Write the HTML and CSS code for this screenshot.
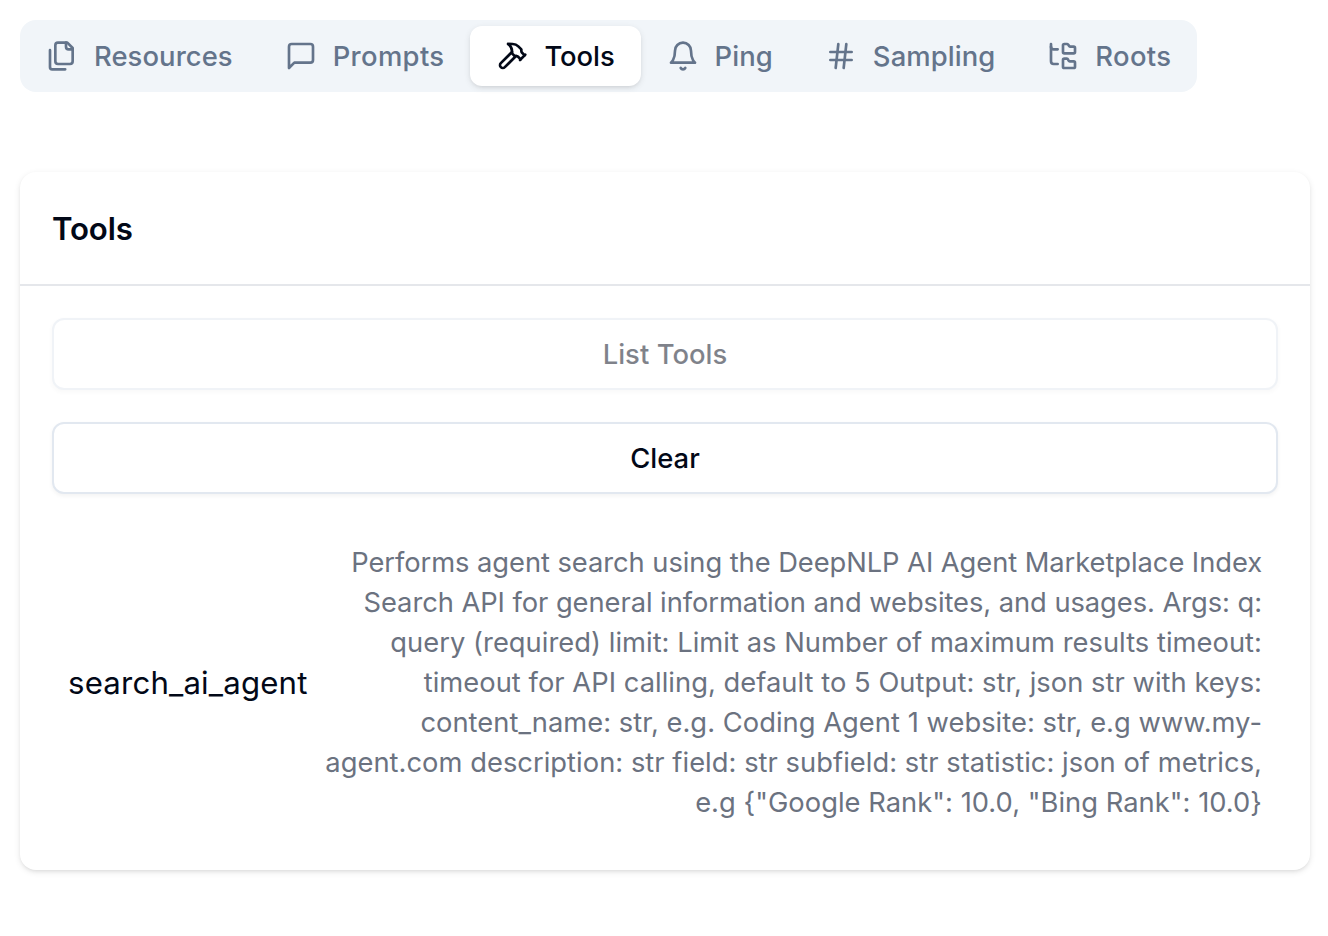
FILE: index.html
```html
<!DOCTYPE html>
<html lang="en">
<head>
<meta charset="utf-8">
<title>Tools</title>
<link rel="stylesheet" href="styles.css">
</head>
<body>
<nav class="tabs">
  <button class="tab"><svg class="icon" viewBox="0 0 24 24"><path d="M20 7h-3a2 2 0 0 1-2-2V2"/><path d="M9 18a2 2 0 0 1-2-2V4a2 2 0 0 1 2-2h7l4 4v10a2 2 0 0 1-2 2Z"/><path d="M3 7.6v12.8A1.6 1.6 0 0 0 4.6 22h9.8"/></svg><span class="label">Resources</span></button>
  <button class="tab"><svg class="icon" viewBox="0 0 24 24"><path d="M21 15a2 2 0 0 1-2 2H7l-4 4V5a2 2 0 0 1 2-2h14a2 2 0 0 1 2 2z"/></svg><span class="label label-loose">Prompts</span></button>
  <button class="tab tab-active"><svg class="icon" viewBox="0 0 24 24"><path d="m15 12-8.373 8.373a1 1 0 1 1-3-3L12 9"/><path d="m18 15 4-4"/><path d="m21.5 11.5-1.914-1.914A2 2 0 0 1 19 8.172V7l-2.26-2.26a6 6 0 0 0-4.202-1.756L9 2.96l.92.82A6.18 6.18 0 0 1 12 8.4V10l2 2h1.172a2 2 0 0 1 1.414.586L18.5 14.5"/></svg><span class="label label-tight">Tools</span></button>
  <button class="tab"><svg class="icon" viewBox="0 0 24 24"><path d="M6 8a6 6 0 0 1 12 0c0 7 3 9 3 9H3s3-2 3-9"/><path d="M10.3 21a1.94 1.94 0 0 0 3.4 0"/></svg><span class="label">Ping</span></button>
  <button class="tab"><svg class="icon" viewBox="0 0 24 24"><path d="M4 9h16M4 15h16M10 3 8 21M16 3l-2 18"/></svg><span class="label">Sampling</span></button>
  <button class="tab"><svg class="icon" viewBox="0 0 24 24"><path d="M20 10a1 1 0 0 0 1-1V6a1 1 0 0 0-1-1h-2.5a1 1 0 0 1-.8-.4l-.9-1.2A1 1 0 0 0 15 3h-2a1 1 0 0 0-1 1v5a1 1 0 0 0 1 1Z"/><path d="M20 21a1 1 0 0 0 1-1v-3a1 1 0 0 0-1-1h-2.9a1 1 0 0 1-.88-.55l-.42-.85a1 1 0 0 0-.92-.6H13a1 1 0 0 0-1 1v5a1 1 0 0 0 1 1Z"/><path d="M3 5a2 2 0 0 0 2 2h3"/><path d="M3 3v13a2 2 0 0 0 2 2h3"/></svg><span class="label label-loose">Roots</span></button>
</nav>
<main class="card">
  <header class="card-header"><h3 class="card-title">Tools</h3></header>
  <div class="card-body">
    <button class="button button-disabled" disabled>List Tools</button>
    <button class="button">Clear</button>
    <div class="tool">
      <span class="tool-name">search_ai_agent</span>
      <div class="tool-description">
        <div class="line-tight">Performs agent search using the DeepNLP AI Agent Marketplace Index</div>
        <div class="line-tight">Search API for general information and websites, and usages. Args: q:</div>
        <div>query (required) limit: Limit as Number of maximum results timeout:</div>
        <div>timeout for API calling, default to 5 Output: str, json str with keys:</div>
        <div>content_name: str, e.g. Coding Agent 1 website: str, e.g www.my-</div>
        <div>agent.com description: str field: str subfield: str statistic: json of metrics,</div>
        <div>e.g {"Google Rank": 10.0, "Bing Rank": 10.0}</div>
      </div>
    </div>
  </div>
</main>
</body>
</html>
```
FILE: styles.css
```css
* { box-sizing: border-box; }
body {
  margin: 0;
  min-height: 936px;
  padding: 20px 18px 0 20px;
  background: #fff;
  color: #020817;
  font-family: Inter, "Liberation Sans", sans-serif;
}
button { font: inherit; color: inherit; margin: 0; }
.tabs {
  display: flex;
  align-items: center;
  width: 1177px;
  height: 72px;
  border-radius: 16px;
  background: #f1f5f9;
  color: #64748b;
}
.tab {
  display: flex;
  align-items: center;
  gap: 16px;
  height: 60px;
  padding: 0 26px;
  border: 0;
  border-radius: 12px;
  background: none;
  font-size: 27.4px;
  font-weight: 500;
  line-height: 40px;
  white-space: nowrap;
}
.label { letter-spacing: .08px; }
.label-loose { letter-spacing: .35px; }
.label-tight { letter-spacing: -.06px; }
.tab-active {
  background: #fff;
  color: #020817;
  box-shadow: 0 2px 6px rgba(0, 0, 0, .1), 0 2px 4px -2px rgba(0, 0, 0, .1);
}
.icon {
  flex: none;
  width: 32px;
  height: 32px;
  fill: none;
  stroke: currentColor;
  stroke-width: 2;
  stroke-linecap: round;
  stroke-linejoin: round;
}
.card {
  height: 698px;
  margin-top: 80px;
  border-radius: 16px;
  background: #fff;
  box-shadow: 0 2px 6px rgba(0, 0, 0, .1), 0 2px 4px -2px rgba(0, 0, 0, .1);
}
.card-header {
  height: 114px;
  padding: 29px 32px;
  border-bottom: 2px solid #e5e7eb;
}
.card-title {
  margin: 0;
  font-size: 31.2px;
  font-weight: 600;
  line-height: 56px;
  letter-spacing: -.15px;
}
.card-body {
  display: flex;
  flex-direction: column;
  gap: 32px;
  padding: 32px;
}
.button {
  height: 72px;
  padding: 0;
  border: 2px solid #e2e8f0;
  border-radius: 12px;
  background: #fff;
  box-shadow: 0 2px 4px rgba(0, 0, 0, .05);
  font-size: 27.4px;
  font-weight: 500;
  letter-spacing: .05px;
}
.button-disabled { opacity: .5; }
.tool {
  display: flex;
  align-items: center;
  justify-content: space-between;
  padding: 17px 16px 15px;
}
.tool-name {
  font-size: 31.2px;
  line-height: 48px;
  letter-spacing: .18px;
}
.tool-description {
  color: #6b7280;
  font-size: 27.3px;
  line-height: 40px;
  letter-spacing: .04px;
  text-align: right;
  white-space: nowrap;
}
.line-tight { letter-spacing: -.05px; }
```
